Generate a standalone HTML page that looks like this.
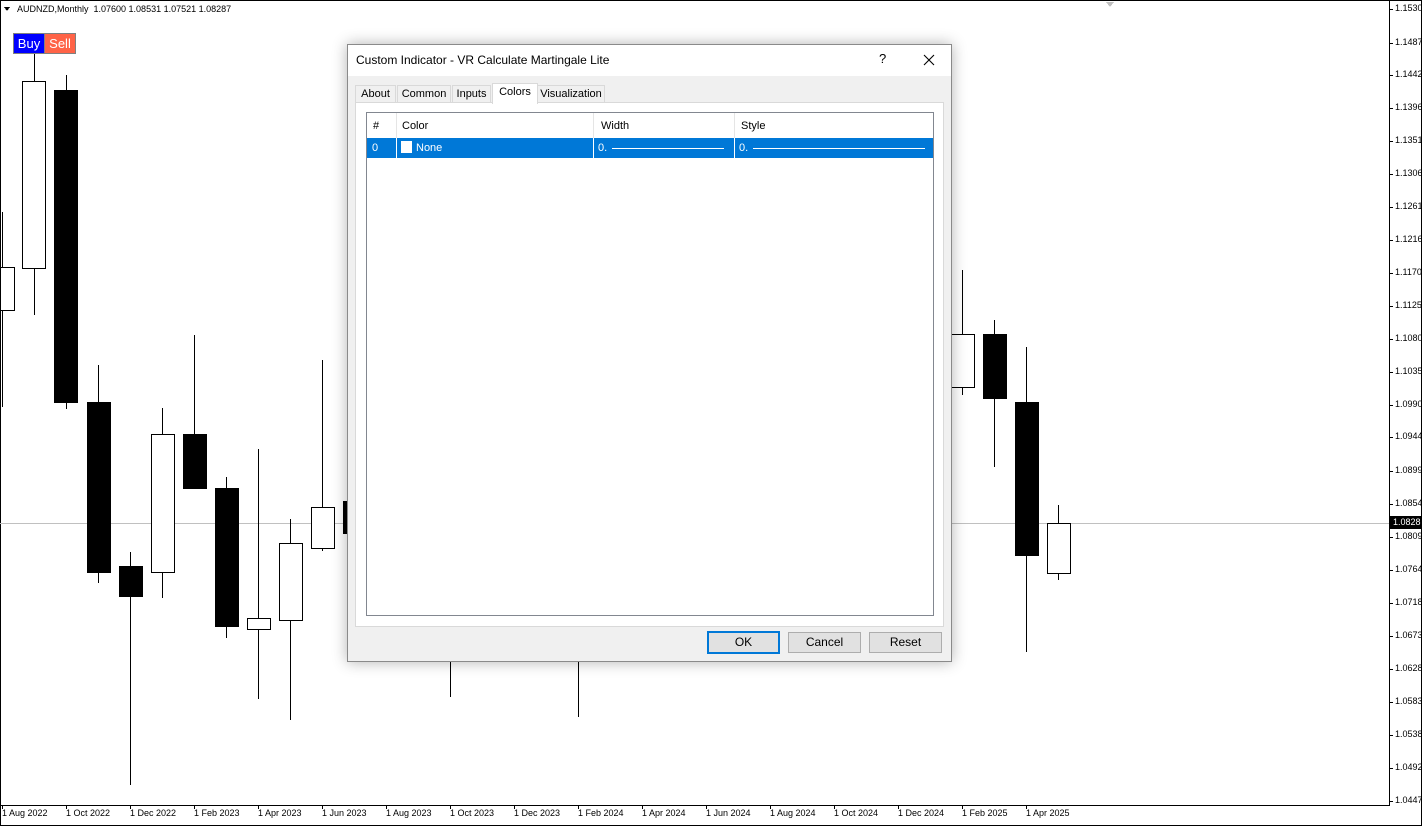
<!DOCTYPE html>
<html><head><meta charset="utf-8"><style>
body{margin:0;width:1422px;height:826px;background:#fff;font-family:"Liberation Sans",sans-serif;position:relative;overflow:hidden}
.t{position:absolute;font-size:9px;color:#000;white-space:nowrap}
.dlg{position:absolute;left:347px;top:44px;width:603px;height:616px;border:1px solid #8a8a8a;background:#f0f0f0;box-shadow:0 0 14px rgba(0,0,0,.3);font-size:11px}
.tb{position:absolute;left:0;top:0;width:603px;height:31px;background:#fff}
.tab{position:absolute;top:40px;height:17px;border:1px solid #d9d9d9;border-bottom:none;background:#f0f0f0;font-size:11px;line-height:17px;text-align:center}
.btn{position:absolute;top:587px;width:71px;height:19px;border:1px solid #adadad;background:#e1e1e1;text-align:center;line-height:19px;font-size:12px}
</style></head><body>
<svg width="1422" height="826" style="position:absolute;left:0;top:0" shape-rendering="crispEdges">
<rect x="0.5" y="0.5" width="1421" height="825" fill="none" stroke="#000" stroke-width="1"/>
<line x1="1389.5" y1="0" x2="1389.5" y2="806" stroke="#000"/>
<line x1="0" y1="805.5" x2="1390" y2="805.5" stroke="#000"/>
<line x1="0" y1="523.5" x2="1389" y2="523.5" stroke="#c0c0c0"/>
<g stroke="#000" stroke-width="1">
<line x1="2.5" y1="212" x2="2.5" y2="407"/><rect x="0.5" y="267.5" width="14" height="43" fill="#fff"/>
<line x1="34.5" y1="52" x2="34.5" y2="315"/><rect x="22.5" y="81.5" width="23" height="187" fill="#fff"/>
<line x1="66.5" y1="75" x2="66.5" y2="409"/><rect x="54.5" y="90.5" width="23" height="312" fill="#000"/>
<line x1="98.5" y1="365" x2="98.5" y2="583"/><rect x="87.5" y="402.5" width="23" height="170" fill="#000"/>
<line x1="130.5" y1="552" x2="130.5" y2="785"/><rect x="119.5" y="566.5" width="23" height="30" fill="#000"/>
<line x1="162.5" y1="408" x2="162.5" y2="598"/><rect x="151.5" y="434.5" width="23" height="138" fill="#fff"/>
<line x1="194.5" y1="335" x2="194.5" y2="488"/><rect x="183.5" y="434.5" width="23" height="54" fill="#000"/>
<line x1="226.5" y1="477" x2="226.5" y2="638"/><rect x="215.5" y="488.5" width="23" height="138" fill="#000"/>
<line x1="258.5" y1="449" x2="258.5" y2="699"/><rect x="247.5" y="618.5" width="23" height="11" fill="#fff"/>
<line x1="290.5" y1="519" x2="290.5" y2="720"/><rect x="279.5" y="543.5" width="23" height="77" fill="#fff"/>
<line x1="322.5" y1="360" x2="322.5" y2="551"/><rect x="311.5" y="507.5" width="23" height="41" fill="#fff"/>
<rect x="343.5" y="501.5" width="10" height="32" fill="#000"/>
<line x1="450.5" y1="600" x2="450.5" y2="697"/>
<line x1="578.5" y1="600" x2="578.5" y2="717"/>
<line x1="962.5" y1="270" x2="962.5" y2="395"/><rect x="951.5" y="334.5" width="23" height="53" fill="#fff"/>
<line x1="994.5" y1="320" x2="994.5" y2="467"/><rect x="983.5" y="334.5" width="23" height="64" fill="#000"/>
<line x1="1026.5" y1="347" x2="1026.5" y2="652"/><rect x="1015.5" y="402.5" width="23" height="153" fill="#000"/>
<line x1="1058.5" y1="505" x2="1058.5" y2="580"/><rect x="1047.5" y="523.5" width="23" height="50" fill="#fff"/>
</g>
<polygon points="1106,2 1114,2 1110,7" fill="#c0c0c0"/>
<polygon points="4,7 10,7 7,11" fill="#000"/>
</svg>
<div class="t" style="left:17px;top:4px">AUDNZD,Monthly&nbsp; 1.07600 1.08531 1.07521 1.08287</div>
<div style="position:absolute;left:13px;top:33px;width:61px;height:19px;border:1px solid #808080;background:#808080">
<div style="position:absolute;left:0;top:0;width:30px;height:19px;background:#0000ff;color:#fff;font-size:13px;line-height:19px;text-align:center">Buy</div>
<div style="position:absolute;left:31px;top:0;width:30px;height:19px;background:#ff6347;color:#fff;font-size:13px;line-height:19px;text-align:center">Sell</div></div>
<div id="px"></div>
<div id="dt"></div>
<div style="position:absolute;left:1390px;top:516px;width:32px;height:13px;background:#000;color:#fff;font-size:9px;line-height:13px;padding-left:3px">1.0828</div>
<div class="dlg">
<div class="tb"><div style="position:absolute;left:8px;top:8px;font-size:12px">Custom Indicator - VR Calculate Martingale Lite</div>
<div style="position:absolute;left:531px;top:6px;font-size:13px">?</div>
<svg style="position:absolute;left:575px;top:9px" width="12" height="12"><path d="M1 1L11 11M11 1L1 11" stroke="#000" stroke-width="1.1" fill="none"/></svg></div>
<div class="tab" style="left:7px;width:39px">About</div>
<div class="tab" style="left:49px;width:52px">Common</div>
<div class="tab" style="left:104px;width:37px">Inputs</div>
<div class="tab" style="left:144px;top:38px;height:20px;width:44px;background:#fff;z-index:2;line-height:17px">Colors</div>
<div class="tab" style="left:189px;width:66px">Visualization</div>
<div style="position:absolute;left:7px;top:57px;width:587px;height:523px;background:#fff;border:1px solid #d9d9d9"></div>
<div style="position:absolute;left:18px;top:67px;width:566px;height:502px;background:#fff;border:1px solid #828790">
<div style="position:absolute;left:0;top:0;width:566px;height:24px;font-size:11px">
<span style="position:absolute;left:6px;top:7px">#</span><span style="position:absolute;left:35px;top:7px">Color</span><span style="position:absolute;left:234px;top:7px">Width</span><span style="position:absolute;left:374px;top:7px">Style</span>
<div style="position:absolute;left:29px;top:0;width:1px;height:45px;background:#e5e5e5"></div>
<div style="position:absolute;left:226px;top:0;width:1px;height:45px;background:#e5e5e5"></div>
<div style="position:absolute;left:367px;top:0;width:1px;height:45px;background:#e5e5e5"></div></div>
<div style="position:absolute;left:0;top:25px;width:566px;height:20px;background:#0078d7;color:#fff;font-size:11px">
<span style="position:absolute;left:5px;top:4px">0</span>
<div style="position:absolute;left:34px;top:3px;width:11px;height:12px;background:#fff"></div>
<span style="position:absolute;left:49px;top:4px">None</span>
<div style="position:absolute;left:29px;top:0;width:1px;height:20px;background:#fff"></div>
<div style="position:absolute;left:226px;top:0;width:1px;height:20px;background:#fff"></div>
<div style="position:absolute;left:367px;top:0;width:1px;height:20px;background:#fff"></div>
<span style="position:absolute;left:231px;top:4px">0.</span><div style="position:absolute;left:245px;top:10px;width:112px;height:1px;background:#fff"></div>
<span style="position:absolute;left:372px;top:4px">0.</span><div style="position:absolute;left:386px;top:10px;width:172px;height:1px;background:#fff"></div>
</div></div>
<div class="btn" style="left:359px;border:2px solid #0078d7;top:586px;width:69px">OK</div>
<div class="btn" style="left:440px">Cancel</div>
<div class="btn" style="left:521px">Reset</div>
</div>
<script>
var p=[["1.1530",9],["1.1487",43],["1.1442",75],["1.1396",108],["1.1351",141],["1.1306",174],["1.1261",207],["1.1216",240],["1.1170",273],["1.1125",306],["1.1080",339],["1.1035",372],["1.0990",405],["1.0944",437],["1.0899",471],["1.0854",504],["1.0809",537],["1.0764",570],["1.0718",603],["1.0673",636],["1.0628",669],["1.0583",702],["1.0538",735],["1.0492",768],["1.0447",801]];
var h="";p.forEach(function(a){h+='<div class="t" style="left:1395px;top:'+(a[1]-6)+'px">'+a[0]+'</div><div style="position:absolute;left:1389px;top:'+a[1]+'px;width:4px;height:1px;background:#000"></div>';});
document.getElementById("px").innerHTML=h;
var d=["1 Aug 2022","1 Oct 2022","1 Dec 2022","1 Feb 2023","1 Apr 2023","1 Jun 2023","1 Aug 2023","1 Oct 2023","1 Dec 2023","1 Feb 2024","1 Apr 2024","1 Jun 2024","1 Aug 2024","1 Oct 2024","1 Dec 2024","1 Feb 2025","1 Apr 2025"];
h="";d.forEach(function(s,i){var x=2+i*64;h+='<div class="t" style="left:'+x+'px;top:808px">'+s+'</div><div style="position:absolute;left:'+x+'px;top:805px;width:1px;height:4px;background:#000"></div>';});
document.getElementById("dt").innerHTML=h;
</script>
</body></html>
